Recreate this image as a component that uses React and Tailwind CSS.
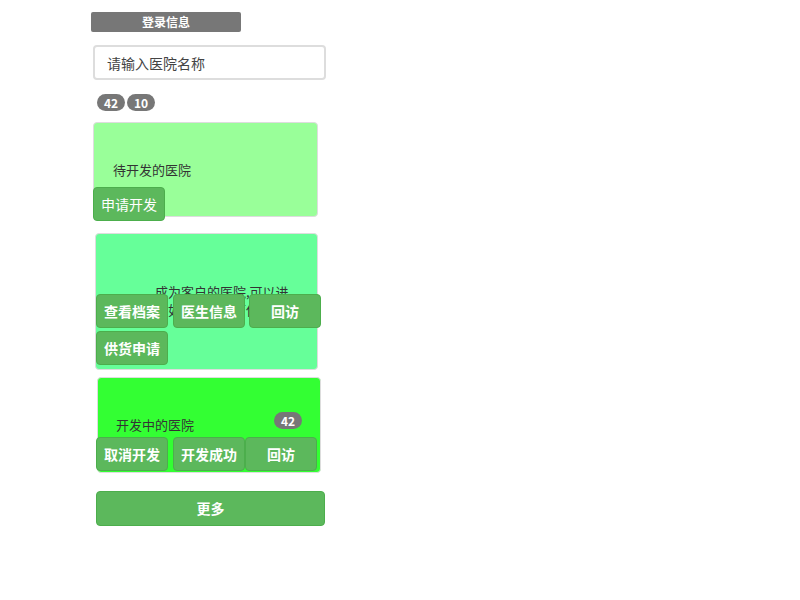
import React from 'react';

const font = { fontFamily: '"Noto Sans CJK SC", "Noto Sans", sans-serif' };

function Btn({ children, className = '', bold = true }) {
  return (
    <button
      className={`h-[34px] w-[72px] shrink-0 rounded-[4px] border border-[#4cae4c] bg-[#5cb85c] text-[14px] leading-none text-white ${bold ? 'font-bold' : ''} ${className}`}
    >
      {children}
    </button>
  );
}

function Badge({ children }) {
  return (
    <span className="inline-flex h-[17px] w-[28px] items-center justify-center rounded-full bg-[#777] text-[12px] font-bold leading-none text-white">
      {children}
    </span>
  );
}

export default function App() {
  return (
    <div className="min-h-screen bg-white text-[#333]" style={font}>
      <div className="flex w-[240px] flex-col pl-[91px] pt-[12px]">
        {/* title bar */}
        <div className="flex h-[20px] w-[150px] items-center justify-center rounded-[2px] bg-[#777] text-[12px] font-bold text-white">
          登录信息
        </div>

        {/* search */}
        <input
          className="mt-[13px] ml-[2px] h-[35px] w-[233px] rounded-[4px] border-2 border-[#ddd] px-[12px] text-[14px] text-[#444] placeholder:text-[#444] outline-none"
          placeholder="请输入医院名称"
        />

        {/* counts */}
        <div className="mt-[14px] ml-[6px] flex gap-[2px]">
          <Badge>42</Badge>
          <Badge>10</Badge>
        </div>

        {/* pending */}
        <div className="mt-[11px] ml-[2px] flex h-[95px] w-[225px] flex-col rounded-[4px] border border-[#ddd] bg-[#99ff99]">
          <p className="pl-[19px] pt-[38px] text-[13px] leading-[18px]">待开发的医院</p>
          <Btn bold={false} className="ml-[-1px] mt-[8px]">申请开发</Btn>
        </div>

        {/* customers */}
        <div className="mt-[16px] ml-[4px] flex h-[137px] w-[223px] flex-col rounded-[4px] border border-[#ddd] bg-[#66ff99]">
          <p className="pl-[59px] pr-[16px] pt-[49px] text-[13px] leading-[18px]">
            成为客户的医院,可以进行如下操作，可使用
          </p>
          <div className="mt-[-25px] flex w-[226px] flex-wrap gap-x-[4px] gap-y-[3px]">
            <Btn>查看档案</Btn>
            <Btn className="ml-[1px]">医生信息</Btn>
            <Btn>回访</Btn>
            <Btn>供货申请</Btn>
          </div>
        </div>

        {/* developing */}
        <div className="mt-[7px] ml-[6px] flex h-[96px] w-[224px] flex-col rounded-[4px] border border-[#ddd] bg-[#33ff33]">
          <div className="flex items-start justify-between pl-[18px] pr-[18px] pt-[34px]">
            <p className="pt-[4px] text-[13px] leading-[18px]">开发中的医院</p>
            <Badge>42</Badge>
          </div>
          <div className="ml-[-2px] mt-[3px] flex gap-[4px]">
            <Btn>取消开发</Btn>
            <Btn className="ml-[1px]">开发成功</Btn>
            <Btn className="ml-[-4px]">回访</Btn>
          </div>
        </div>

        {/* more */}
        <button className="mt-[18px] ml-[5px] h-[35px] w-[229px] rounded-[4px] border border-[#4cae4c] bg-[#5cb85c] text-[14px] font-bold text-white">
          更多
        </button>
      </div>
    </div>
  );
}
